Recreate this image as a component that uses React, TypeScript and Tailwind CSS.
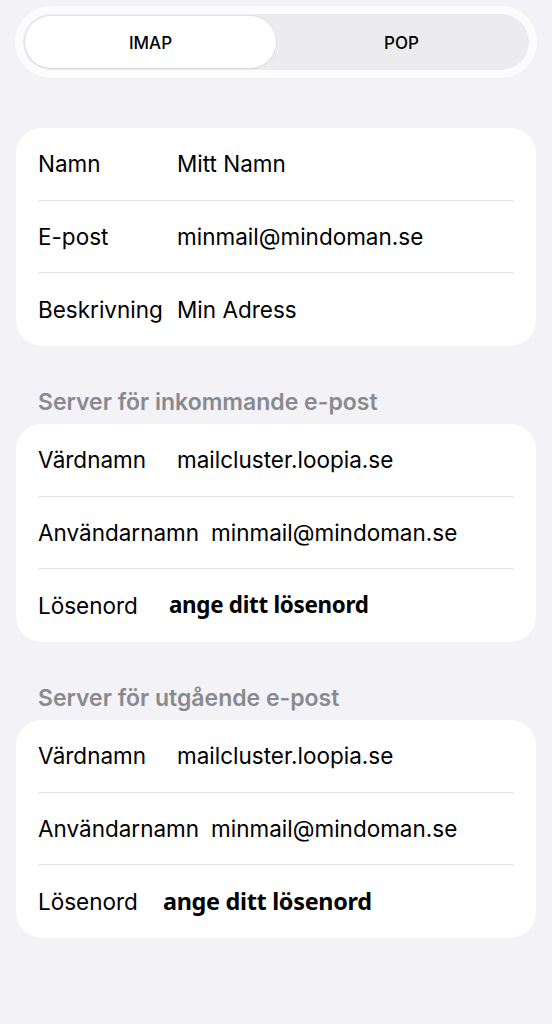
import React, { useState } from 'react';

type Row = { label: string; value: string; labelW: string; secret?: string };

const accountRows: Row[] = [
  { label: 'Namn', value: 'Mitt Namn', labelW: 'w-[139px]' },
  { label: 'E-post', value: 'minmail@mindoman.se', labelW: 'w-[139px]' },
  { label: 'Beskrivning', value: 'Min Adress', labelW: 'w-[139px]' },
];

const incomingRows: Row[] = [
  { label: 'Värdnamn', value: 'mailcluster.loopia.se', labelW: 'w-[139px]' },
  { label: 'Användarnamn', value: 'minmail@mindoman.se', labelW: 'w-[173px]' },
  { label: 'Lösenord', value: 'ange ditt lösenord', labelW: 'w-[131px]', secret: 'text-[22.4px]' },
];

const outgoingRows: Row[] = [
  { label: 'Värdnamn', value: 'mailcluster.loopia.se', labelW: 'w-[139px]' },
  { label: 'Användarnamn', value: 'minmail@mindoman.se', labelW: 'w-[173px]' },
  { label: 'Lösenord', value: 'ange ditt lösenord', labelW: 'w-[125px]', secret: 'text-[23.4px]' },
];

function Card({ rows }: { rows: Row[] }) {
  return (
    <div className="mx-4 bg-white rounded-[26px] px-[22px]">
      {rows.map((row, i) => (
        <div
          key={row.label}
          className={`h-[72.67px] flex items-center ${i < rows.length - 1 ? 'border-b border-[#e3e3e8]' : ''}`}
        >
          <span className={`${row.labelW} shrink-0 text-[22.5px] text-black pt-[1px]`}>{row.label}</span>
          {row.secret ? (
            <span className={`${row.secret} font-bold text-black font-['Noto_Sans',sans-serif] tracking-[-0.3px] -mt-[1px]`}>
              {row.value}
            </span>
          ) : (
            <span className="text-[22.5px] text-black pt-[1px]">{row.value}</span>
          )}
        </div>
      ))}
    </div>
  );
}

function SectionHeader({ title }: { title: string }) {
  return (
    <div className="px-[38px] h-[78px] flex items-end pb-[4px]">
      <span className="text-[23px] font-semibold text-[#8a8a8e]">{title}</span>
    </div>
  );
}

export default function App() {
  const [mode, setMode] = useState<'imap' | 'pop'>('imap');

  return (
    <div className="min-h-screen bg-[#f2f2f7] font-['Inter',sans-serif] pt-[6px] pb-10">
      <div className="mx-[15px] bg-white/80 rounded-full p-[8px]">
        <div className="flex bg-[#ececee] rounded-full p-[2px] h-[56px]">
          <button
            onClick={() => setMode('imap')}
            className={`flex-1 rounded-full text-[17px] font-medium text-black pt-[4px] ${mode === 'imap' ? 'bg-white shadow-[0_0_0_1px_rgba(0,0,0,0.04),0_1px_2px_rgba(0,0,0,0.06)]' : ''}`}
          >
            IMAP
          </button>
          <button
            onClick={() => setMode('pop')}
            className={`flex-1 rounded-full text-[17px] font-medium text-black pt-[4px] ${mode === 'pop' ? 'bg-white shadow-[0_0_0_1px_rgba(0,0,0,0.04),0_1px_2px_rgba(0,0,0,0.06)]' : ''}`}
          >
            POP
          </button>
        </div>
      </div>

      <div className="h-[50px]" />
      <Card rows={accountRows} />

      <SectionHeader title="Server för inkommande e-post" />
      <Card rows={incomingRows} />

      <SectionHeader title="Server för utgående e-post" />
      <Card rows={outgoingRows} />
    </div>
  );
}
